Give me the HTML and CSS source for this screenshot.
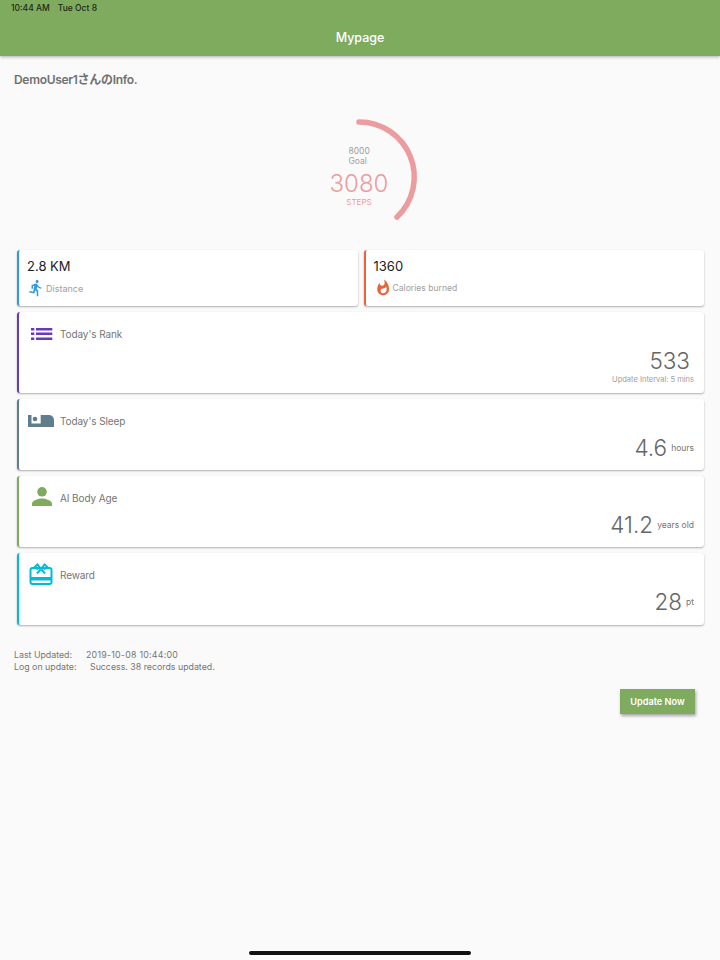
FILE: index.html
```html
<!DOCTYPE html>
<html lang="en">
<head>
  <meta charset="UTF-8">
  <meta name="viewport" content="width=device-width, initial-scale=1.0">
  <title>Mypage</title>
  <link rel="stylesheet" href="styles.css">
</head>
<body>
  <header class="app-header">
    <div class="status-bar"><span>10:44 AM</span><span>Tue Oct 8</span></div>
    <h1 class="page-title">Mypage</h1>
  </header>

  <main class="content">
    <h2 class="user-title">DemoUser1さんのInfo.</h2>

    <div class="gauge">
      <svg class="gauge-ring" width="130" height="120" viewBox="0 0 130 120">
        <path d="M64 7 A55 55 0 0 1 102 102" fill="none" stroke="#ec9c9e" stroke-width="5.5" stroke-linecap="round"/>
      </svg>
      <div class="gauge-text">
        <div class="gauge-goal">8000<br>Goal</div>
        <div class="gauge-value">3080</div>
        <div class="gauge-unit">STEPS</div>
      </div>
    </div>

    <div class="cards">
      <div class="card-row">
        <section class="card small-card blue">
          <div class="small-value">2.8 KM</div>
          <div class="small-label">
            <svg class="small-icon" width="18" height="18" viewBox="0 0 24 24"><path fill="#2d9cdb" d="M13.49 5.48c1.1 0 2-.9 2-2s-.9-2-2-2-2 .9-2 2 .9 2 2 2zm-3.6 13.9l1-4.4 2.1 2v6h2v-7.5l-2.1-2 .6-3c1.3 1.5 3.3 2.5 5.5 2.5v-2c-1.9 0-3.5-1-4.3-2.4l-1-1.6c-.4-.6-1-1-1.7-1-.3 0-.5.1-.8.1l-5.2 2.2v4.7h2v-3.4l1.8-.7-1.6 8.1-4.9-1-.4 2 7 1.4z"/></svg>
            <span>Distance</span>
          </div>
        </section>
        <section class="card small-card orange">
          <div class="small-value">1360</div>
          <div class="small-label">
            <svg class="small-icon" width="18" height="18" viewBox="0 0 24 24"><path fill="#e8643a" d="M13.5.7s.7 2.6.7 4.7c0 2-1.3 3.6-3.3 3.6S7.4 7.4 7.4 5.4l.03-.36C5.500 7.400 4.300 10.400 4.300 13.700c0 4.400 3.500 8 7.900 8s7.900-3.600 7.900-8C20.100 8.300 17.500 3.500 13.500.7zM12 19c-1.800 0-3.200-1.400-3.200-3.100 0-1.600 1-2.800 2.800-3.100 1.800-.4 3.600-1.200 4.700-2.600.4 1.300.6 2.700.6 4.100 0 2.600-2.100 4.700-4.900 4.700z"/></svg>
            <span>Calories burned</span>
          </div>
        </section>
      </div>

      <section class="card wide-card rank-card purple">
        <div class="wide-head">
          <span class="wide-icon">
            <svg width="26" height="18" viewBox="0 0 26 18"><g fill="#673ab7"><rect x="4" y="3" width="3.3" height="2.5"/><rect x="4" y="7.5" width="3.3" height="2.5"/><rect x="4" y="12.5" width="3.3" height="2.5"/><rect x="9" y="3" width="16.3" height="2.5"/><rect x="9" y="7.5" width="16.3" height="2.5"/><rect x="9" y="12.5" width="16.3" height="2.5"/></g></svg>
          </span>
          <span>Today's Rank</span>
        </div>
        <div class="wide-value"><span class="big-num rank-num">533</span></div>
        <div class="interval">Update Interval: 5 mins</div>
      </section>

      <section class="card wide-card slate">
        <div class="wide-head">
          <span class="wide-icon sleep-icon">
            <svg width="26" height="12" viewBox="0 0 26 12"><path fill="#607d8b" d="M0 0h3.500v8.400h9.200V0H21c2.800 0 5 2.200 5 5v7H0z"/><circle cx="7" cy="4" r="2.300" fill="#607d8b"/></svg>
          </span>
          <span>Today's Sleep</span>
        </div>
        <div class="wide-value"><span class="big-num">4.6</span><span class="unit">hours</span></div>
      </section>

      <section class="card wide-card green">
        <div class="wide-head">
          <span class="wide-icon person-icon">
            <svg width="24" height="24" viewBox="0 0 24 24"><g fill="#7fab5f"><circle cx="12" cy="5.800" r="4.800"/><path d="M2 20v-2.500c0-3 6.700-5 10-5s10 2 10 5V20z"/></g></svg>
          </span>
          <span>AI Body Age</span>
        </div>
        <div class="wide-value"><span class="big-num">41.2</span><span class="unit">years old</span></div>
      </section>

      <section class="card wide-card reward-card cyan">
        <div class="wide-head">
          <span class="wide-icon reward-icon">
            <svg width="24" height="24" viewBox="0 0 24 24"><g fill="none" stroke="#00bcd4" stroke-width="2"><rect x="1.500" y="5" width="21" height="16" rx="2"/><path d="M12 6 8.500 1.500 6 3.800 9 6.500M12 6l3.500-4.500L18 3.800l-3 2.700M12 6l-4 4.500M12 6l4 4.500"/></g><rect x="1" y="14" width="22" height="3.500" fill="#00bcd4"/></svg>
          </span>
          <span>Reward</span>
        </div>
        <div class="wide-value"><span class="big-num">28</span><span class="unit">pt</span></div>
      </section>
    </div>

    <div class="update-log">
      <div><span class="log-label">Last Updated:</span><span class="log-date">2019-10-08 10:44:00</span></div>
      <div><span class="log-label">Log on update:</span><span class="log-msg">Success. 38 records updated.</span></div>
    </div>

    <div class="actions">
      <button class="update-btn">Update Now</button>
    </div>
  </main>

  <div class="home-bar"></div>
</body>
</html>
```

FILE: styles.css
```css
body {
  margin: 0;
  height: 960px;
  overflow: hidden;
  position: relative;
  background-color: #fafafa;
  font-family: Inter, "Noto Sans CJK JP", sans-serif;
  color: #757575;
}

.app-header {
  height: 56px;
  background-color: #7fab5f;
  box-shadow: 0 1px 3px rgba(0, 0, 0, 0.3);
  box-sizing: border-box;
  padding-top: 3px;
}

.status-bar {
  display: flex;
  gap: 8px;
  padding-left: 11px;
  font-size: 8.5px;
  line-height: 11px;
  font-weight: 500;
  color: #1d2a14;
}

.page-title {
  margin: 13px 0 0;
  text-align: center;
  font-size: 12.5px;
  line-height: 22px;
  font-weight: 500;
  color: #fff;
}

.content {
  padding: 0 16px;
}

.user-title {
  margin: 16px 0 0 -2px;
  font-size: 12px;
  line-height: 16px;
  font-weight: 600;
  letter-spacing: -0.3px;
  color: #707070;
}

.gauge {
  position: relative;
  width: 130px;
  height: 120px;
  margin: 27px auto 0;
  left: 0;
}

.gauge-ring {
  display: block;
}

.gauge-text {
  position: absolute;
  left: -1px;
  top: 32px;
  width: 130px;
  text-align: center;
}

.gauge-goal {
  display: inline-block;
  width: 21px;
  text-align: left;
  font-size: 8.5px;
  line-height: 9.5px;
  color: #9e9e9e;
  vertical-align: top;
}

.gauge-value {
  font-size: 24px;
  font-weight: 300;
  line-height: 28px;
  margin-top: 3px;
  color: #ec9c9e;
}

.gauge-unit {
  font-size: 8px;
  line-height: 9px;
  color: #ec9c9e;
}

.cards {
  margin-top: 15px;
  padding-left: 1px;
  display: flex;
  flex-direction: column;
  gap: 6px;
}

.card-row {
  display: flex;
  gap: 6px;
}

.card {
  box-sizing: border-box;
  background-color: #fff;
  border-left: 2px solid #999;
  border-radius: 3px;
  box-shadow: 0 1px 2px rgba(0, 0, 0, 0.3);
}

.blue { border-left-color: #2d9cdb; }
.orange { border-left-color: #e8643a; }
.purple { border-left-color: #673ab7; }
.slate { border-left-color: #607d8b; }
.green { border-left-color: #7fab5f; }
.cyan { border-left-color: #00bcd4; }

.small-card {
  flex: 1;
  height: 56px;
  padding: 8px 0 0 8px;
}

.small-value {
  font-size: 13px;
  line-height: 17px;
  color: #222;
}

.small-label {
  display: flex;
  align-items: center;
  margin-top: 4px;
  padding-left: 1px;
  font-size: 9px;
  color: #9e9e9e;
}

.small-icon {
  margin-left: -1px;
  margin-right: 1px;
}

.orange .small-label {
  font-size: 8.6px;
}

.wide-card {
  height: 71px;
  padding: 12px 10px 0 0;
}

.rank-card {
  height: 81px;
}

.reward-card {
  height: 72px;
}

.wide-head {
  display: flex;
  align-items: center;
  height: 20px;
  font-size: 10px;
  letter-spacing: -0.1px;
  color: #757575;
}

.wide-icon {
  display: flex;
  justify-content: center;
  width: 41px;
}

.sleep-icon svg {
  margin-left: 2px;
}

.person-icon svg {
  margin-left: 4px;
}

.reward-icon svg {
  margin-left: 3px;
}

.wide-value {
  display: flex;
  justify-content: flex-end;
  align-items: center;
  gap: 4px;
  margin-top: 4px;
  height: 26px;
}

.big-num {
  font-size: 22.5px;
  font-weight: 300;
  line-height: 26px;
  color: #666;
}

.rank-num {
  margin-right: 4px;
}

.unit {
  font-size: 8.5px;
  color: #757575;
}

.interval {
  margin-top: 1px;
  text-align: right;
  font-size: 7.5px;
  line-height: 10px;
  color: #9e9e9e;
}

.update-log {
  margin: 24px 0 0 -2px;
  font-size: 8.8px;
  line-height: 12px;
  color: #757575;
}

.log-label {
  display: inline-block;
  width: 72px;
}

.log-date {
  letter-spacing: 0.25px;
}

.log-msg {
  margin-left: 4px;
}

.actions {
  display: flex;
  justify-content: flex-end;
  margin-top: 16px;
  padding-right: 9px;
}

.update-btn {
  width: 75px;
  height: 25px;
  padding: 0;
  border: none;
  background-color: #7fab5f;
  box-shadow: 1px 2px 3px rgba(0, 0, 0, 0.35);
  font-family: inherit;
  font-size: 9.2px;
  font-weight: 600;
  color: #fff;
}

.home-bar {
  position: absolute;
  left: 249px;
  bottom: 5px;
  width: 222px;
  height: 4px;
  border-radius: 2px;
  background-color: #111;
}
```
